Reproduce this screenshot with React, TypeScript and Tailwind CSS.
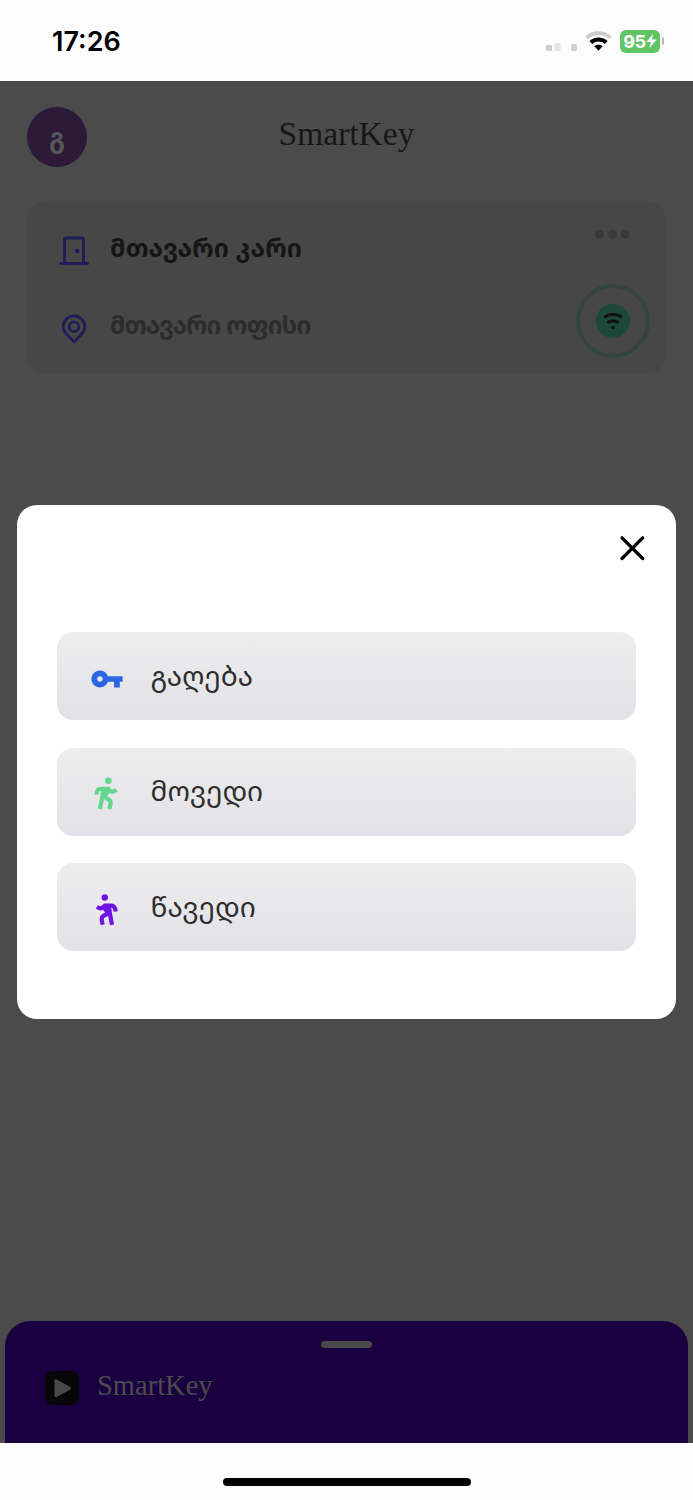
import type { ReactNode } from 'react';

const GEO = "font-['Noto_Sans_Georgian','Noto_Sans','DejaVu_Sans',sans-serif]";

function StatusBar() {
  return (
    <header className="flex h-[80.500px] items-start justify-between bg-[#fcfcfc] pl-[52px] pr-[29px]">
      <div className="mt-[25px] font-['Inter',sans-serif] text-[27px] font-semibold leading-[34px] text-black">17:26</div>
      <div className="mt-[29px] flex items-center">
        <svg width="34" height="24" viewBox="0 0 34 24">
          <rect x="1" y="16" width="6" height="6" rx="1.5" fill="#cbcbcb" />
          <rect x="9.500" y="14" width="6" height="8" rx="1.5" fill="#e4e4e4" />
          <rect x="26" y="15" width="6" height="7" rx="1.5" fill="#cfcfcf" />
        </svg>
        <svg className="ml-[6px]" width="27" height="24" viewBox="0 0 27 24" fill="none">
          <path d="M1.500 8.800C8 2.500 19 2.500 25.500 8.800" stroke="#cbcbcb" strokeWidth="3.800" />
          <path d="M5.800 13.500C10 9.500 17 9.500 21.200 13.500" stroke="#000" strokeWidth="4" />
          <path d="M9.300 17.300C11.500 15.300 15.500 15.300 17.700 17.300L13.500 21.800z" fill="#000" />
        </svg>
        <div className="ml-[8px] flex h-[23px] w-[40px] items-center justify-center rounded-[6px] bg-[#63c466] font-['Inter',sans-serif] text-[18px] font-bold tracking-[-0.300px] text-white">
          95
          <svg width="11" height="14" viewBox="0 0 10 14" fill="#fff"><path d="M6.500 0L0 8h4.300L3 14l7-8.500H5.500z" /></svg>
        </div>
        <div className="ml-[2px] h-[8px] w-[2px] rounded-r-full bg-[#b5b5b5]" />
      </div>
    </header>
  );
}

function DoorIcon() {
  return (
    <svg width="32" height="32" viewBox="0 0 32 32" fill="none" stroke="#211d57" strokeWidth="3" strokeLinecap="round" strokeLinejoin="round">
      <path d="M2.500 29.500h27M6.500 29V5.500A1.500 1.500 0 0 1 8 4h16a1.500 1.500 0 0 1 1.500 1.500V29" />
      <circle cx="19.300" cy="17" r="2.200" fill="#211d57" stroke="none" />
    </svg>
  );
}

function PinIcon() {
  return (
    <svg width="32" height="32" viewBox="0 0 32 32" fill="none" stroke="#211d57" strokeWidth="2.800" strokeLinejoin="round">
      <path d="M16 29.800L8.300 22a10.700 10.700 0 1 1 15.400 0z" />
      <circle cx="16" cy="14.700" r="4.800" />
    </svg>
  );
}

function KeyIcon() {
  return (
    <svg width="34" height="34" viewBox="0 0 24 24" fill="#2b67e2">
      <path d="M12.650 10C11.830 7.670 9.610 6 7 6c-3.310 0-6 2.690-6 6s2.690 6 6 6c2.610 0 4.830-1.670 5.650-4H17v4h4v-4h2v-4H12.650zM7 14c-1.100 0-2-.9-2-2s.9-2 2-2 2 .9 2 2-.9 2-2 2z" />
    </svg>
  );
}

function ArriveIcon() {
  return (
    <svg width="34" height="34" viewBox="0 0 34 34" fill="none" stroke="#63d78e" strokeWidth="4.200">
      <circle cx="18.300" cy="3.800" r="3.300" fill="#63d78e" stroke="none" />
      <path d="M12.500 10h6l1 5.500-3.500 6-3-.5-2.500-4z" fill="#63d78e" stroke="none" />
      <path d="M6.500 17.500c.2-4 1.300-5.700 4-5.700h7.500c1.500 3 4 4.300 8.500 1.200M14 12L9.800 32M14.500 20l5.500 3.500c1.300 1.300.5 4-.7 8.500" />
    </svg>
  );
}

function LeaveIcon() {
  return (
    <svg width="34" height="34" viewBox="0 0 34 34" fill="none" stroke="#7014e6" strokeWidth="4.200">
      <circle cx="14.800" cy="4.500" r="3.200" fill="#7014e6" stroke="none" />
      <path d="M20 11h-6l-1 5.500 3.500 5 3-.5 2-4z" fill="#7014e6" stroke="none" />
      <path d="M25.700 18.500c-.5-4-1.700-5.900-4.200-5.900h-6.500c-2 2.700-4.500 3.800-8 1.300M18.500 13l3.500 18.800M18 20.500L13 23c-2 1.300-1.300 4.300-.3 8.800" />
    </svg>
  );
}

function Action({ icon, label }: { icon: ReactNode; label: string }) {
  return (
    <button className="flex h-[88px] w-full items-center rounded-[16px] bg-gradient-to-b from-[#ededed] to-[#e2e1e7] pl-[33px] text-left">
      <span className="mt-[5px]">{icon}</span>
      <span className={`-mt-[3px] ml-[26.500px] text-[28px] leading-[36px] text-[#2e2e2e] ${GEO}`}>{label}</span>
    </button>
  );
}

export default function App() {
  return (
    <div className="flex h-[1500px] w-[693px] flex-col overflow-hidden bg-[#fcfcfc]">
      <StatusBar />

      <main className="relative flex h-[1362px] flex-col bg-[#4b4b4b]">
        <div className="relative flex h-[120.500px] justify-center">
          <div className={`absolute left-[27px] top-[26.500px] flex size-[60px] items-center justify-center rounded-full bg-[#2c1a38] text-[26px] font-bold text-[#575757] ${GEO}`}>გ</div>
          <h1 className="mt-[33px] font-['Liberation_Serif',serif] text-[33.500px] leading-[40px] text-[#171717]">SmartKey</h1>
        </div>

        <section className="mx-[27px] flex h-[173px] justify-between rounded-[20px] bg-[#474747] pl-[31px] pr-[16.500px]">
          <div className={`flex flex-col text-[25px] font-bold leading-[36px] ${GEO}`}>
            <div className="mt-[33px] flex items-center gap-[20px] text-[#151515]">
              <DoorIcon />
              <span className="-mt-[6px] tracking-[0.100px]">მთავარი კარი</span>
            </div>
            <div className="mt-[46px] flex items-center gap-[20px] text-[#2c2c2c]">
              <PinIcon />
              <span className="-mt-[6px] text-[24.500px] tracking-[-0.750px]">მთავარი ოფისი</span>
            </div>
          </div>
          <div className="flex flex-col items-center">
            <div className="mt-[29px] flex gap-[4px]">
              <i className="size-[9px] rounded-full bg-[#393939]" />
              <i className="size-[9px] rounded-full bg-[#393939]" />
              <i className="size-[9px] rounded-full bg-[#393939]" />
            </div>
            <div className="mt-[45px] flex size-[74px] items-center justify-center rounded-full border-[4px] border-[#34453f]">
              <div className="flex size-[34px] items-center justify-center rounded-full bg-[#1c4839]">
                <svg width="20" height="20" viewBox="0 0 20 20" fill="none" stroke="#111" strokeWidth="3.200" strokeLinecap="round">
                  <path d="M2.500 5.500c4.500-3 10.500-3 15 0M5.500 11.200c2.800-1.800 6.200-1.800 9 0" />
                  <circle cx="10" cy="16.500" r="1.800" fill="#111" stroke="none" />
                </svg>
              </div>
            </div>
          </div>
        </section>

        <footer className="mx-[5px] mt-auto flex h-[122px] flex-col rounded-t-[25px] bg-[#1b0041]">
          <div className="mx-auto mt-[20px] h-[7px] w-[51px] rounded-full bg-[#484848]" />
          <div className="ml-[40px] mt-[23px] flex items-center gap-[18px]">
            <svg width="34" height="34" viewBox="0 0 34 34">
              <rect width="34" height="34" rx="8" fill="#07070a" />
              <path d="M11 9.800v15L24.500 17.300z" fill="#484848" stroke="#484848" strokeWidth="3" strokeLinejoin="round" />
            </svg>
            <span className="-mt-[4px] font-['Liberation_Serif',serif] text-[28.500px] leading-[34px] text-[#4b4b4b]">SmartKey</span>
          </div>
        </footer>

        <div role="dialog" className="absolute left-[17px] top-[424.500px] flex h-[513.500px] w-[659px] flex-col rounded-[20px] bg-white px-[40px]">
          <button className="-mr-[10px] mt-[29px] self-end">
            <svg width="28" height="28" viewBox="0 0 28 28" fill="none" stroke="#000" strokeWidth="3.300" strokeLinecap="round">
              <path d="M4 3.800l20.700 20.700M24.700 3.800L4 24.500" />
            </svg>
          </button>
          <div className="mt-[70px] flex flex-col gap-[27.500px]">
            <Action icon={<KeyIcon />} label="გაღება" />
            <Action icon={<ArriveIcon />} label="მოვედი" />
            <Action icon={<LeaveIcon />} label="წავედი" />
          </div>
        </div>
      </main>

      <div className="flex flex-1 justify-center pt-[35px]">
        <div className="h-[8px] w-[248px] rounded-full bg-black" />
      </div>
    </div>
  );
}
